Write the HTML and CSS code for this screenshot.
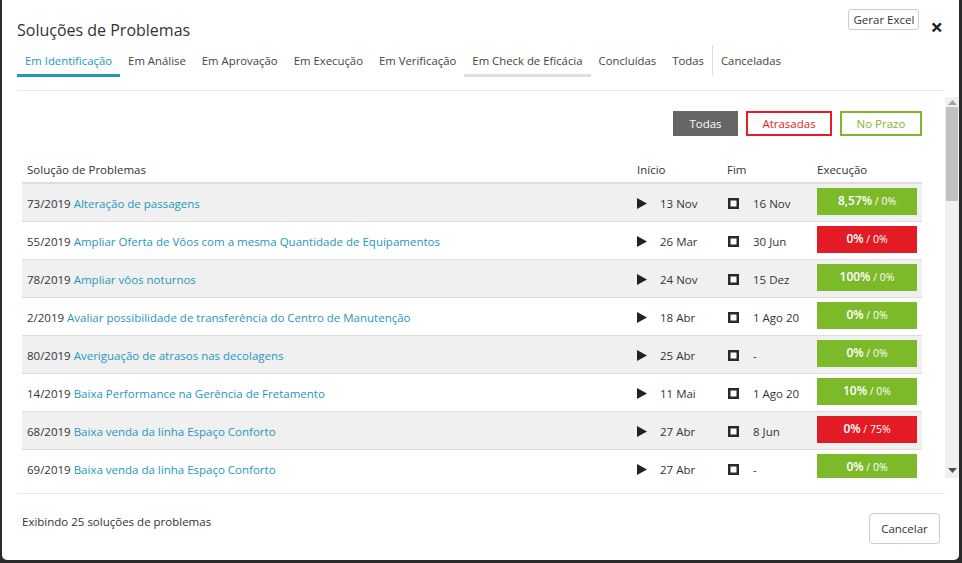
FILE: index.html
```html
<!DOCTYPE html>
<html lang="pt-BR">
<head>
<meta charset="utf-8">
<title>Soluções de Problemas</title>
<link rel="stylesheet" href="styles.css">
</head>
<body>
<div class="modal">
  <div class="head">
    <h4 class="title">Soluções de Problemas</h4>
    <div class="head-actions">
      <button class="btn-excel">Gerar Excel</button>
      <span class="close">×</span>
    </div>
  </div>
  <nav class="tabs">
    <a class="tab active">Em Identificação</a>
    <a class="tab">Em Análise</a>
    <a class="tab">Em Aprovação</a>
    <a class="tab">Em Execução</a>
    <a class="tab">Em Verificação</a>
    <a class="tab hover">Em Check de Eficácia</a>
    <a class="tab">Concluídas</a>
    <a class="tab">Todas</a>
    <a class="tab sep">Canceladas</a>
  </nav>
  <div class="body">
    <div class="scroll">
      <div class="filters">
        <button class="f f-all">Todas</button>
        <button class="f f-late">Atrasadas</button>
        <button class="f f-ok">No Prazo</button>
      </div>
      <table class="grid">
        <colgroup>
          <col class="c1"><col class="c2"><col class="c3"><col class="c4">
        </colgroup>
        <thead>
          <tr><th>Solução de Problemas</th><th>Início</th><th>Fim</th><th>Execução</th></tr>
        </thead>
        <tbody>
          <tr>
            <td>73/2019 <a class="lnk">Alteração de passagens</a></td>
            <td><span class="ic play"><svg width="10" height="11" viewBox="0 0 10 11"><polygon points="0,0 10,5.5 0,11" fill="#222"/></svg></span>13 Nov</td>
            <td><span class="ic stop"><svg width="11" height="11" viewBox="0 0 11 11"><rect x="1.25" y="1.25" width="8.5" height="8.5" fill="#fff" stroke="#2a2a2a" stroke-width="2.5"/></svg></span>16 Nov</td>
            <td><div class="ex green"><b>8,57%</b> / 0%</div></td>
          </tr>
          <tr>
            <td>55/2019 <a class="lnk">Ampliar Oferta de Vôos com a mesma Quantidade de Equipamentos</a></td>
            <td><span class="ic play"><svg width="10" height="11" viewBox="0 0 10 11"><polygon points="0,0 10,5.5 0,11" fill="#222"/></svg></span>26 Mar</td>
            <td><span class="ic stop"><svg width="11" height="11" viewBox="0 0 11 11"><rect x="1.25" y="1.25" width="8.5" height="8.5" fill="#fff" stroke="#2a2a2a" stroke-width="2.5"/></svg></span>30 Jun</td>
            <td><div class="ex red"><b>0%</b> / 0%</div></td>
          </tr>
          <tr>
            <td>78/2019 <a class="lnk">Ampliar vôos noturnos</a></td>
            <td><span class="ic play"><svg width="10" height="11" viewBox="0 0 10 11"><polygon points="0,0 10,5.5 0,11" fill="#222"/></svg></span>24 Nov</td>
            <td><span class="ic stop"><svg width="11" height="11" viewBox="0 0 11 11"><rect x="1.25" y="1.25" width="8.5" height="8.5" fill="#fff" stroke="#2a2a2a" stroke-width="2.5"/></svg></span>15 Dez</td>
            <td><div class="ex green"><b>100%</b> / 0%</div></td>
          </tr>
          <tr>
            <td>2/2019 <a class="lnk">Avaliar possibilidade de transferência do Centro de Manutenção</a></td>
            <td><span class="ic play"><svg width="10" height="11" viewBox="0 0 10 11"><polygon points="0,0 10,5.5 0,11" fill="#222"/></svg></span>18 Abr</td>
            <td><span class="ic stop"><svg width="11" height="11" viewBox="0 0 11 11"><rect x="1.25" y="1.25" width="8.5" height="8.5" fill="#fff" stroke="#2a2a2a" stroke-width="2.5"/></svg></span>1 Ago 20</td>
            <td><div class="ex green"><b>0%</b> / 0%</div></td>
          </tr>
          <tr>
            <td>80/2019 <a class="lnk">Averiguação de atrasos nas decolagens</a></td>
            <td><span class="ic play"><svg width="10" height="11" viewBox="0 0 10 11"><polygon points="0,0 10,5.5 0,11" fill="#222"/></svg></span>25 Abr</td>
            <td><span class="ic stop"><svg width="11" height="11" viewBox="0 0 11 11"><rect x="1.25" y="1.25" width="8.5" height="8.5" fill="#fff" stroke="#2a2a2a" stroke-width="2.5"/></svg></span>-</td>
            <td><div class="ex green"><b>0%</b> / 0%</div></td>
          </tr>
          <tr>
            <td>14/2019 <a class="lnk">Baixa Performance na Gerência de Fretamento</a></td>
            <td><span class="ic play"><svg width="10" height="11" viewBox="0 0 10 11"><polygon points="0,0 10,5.5 0,11" fill="#222"/></svg></span>11 Mai</td>
            <td><span class="ic stop"><svg width="11" height="11" viewBox="0 0 11 11"><rect x="1.25" y="1.25" width="8.5" height="8.5" fill="#fff" stroke="#2a2a2a" stroke-width="2.5"/></svg></span>1 Ago 20</td>
            <td><div class="ex green"><b>10%</b> / 0%</div></td>
          </tr>
          <tr>
            <td>68/2019 <a class="lnk">Baixa venda da linha Espaço Conforto</a></td>
            <td><span class="ic play"><svg width="10" height="11" viewBox="0 0 10 11"><polygon points="0,0 10,5.5 0,11" fill="#222"/></svg></span>27 Abr</td>
            <td><span class="ic stop"><svg width="11" height="11" viewBox="0 0 11 11"><rect x="1.25" y="1.25" width="8.5" height="8.5" fill="#fff" stroke="#2a2a2a" stroke-width="2.5"/></svg></span>8 Jun</td>
            <td><div class="ex red"><b>0%</b> / 75%</div></td>
          </tr>
          <tr>
            <td>69/2019 <a class="lnk">Baixa venda da linha Espaço Conforto</a></td>
            <td><span class="ic play"><svg width="10" height="11" viewBox="0 0 10 11"><polygon points="0,0 10,5.5 0,11" fill="#222"/></svg></span>27 Abr</td>
            <td><span class="ic stop"><svg width="11" height="11" viewBox="0 0 11 11"><rect x="1.25" y="1.25" width="8.5" height="8.5" fill="#fff" stroke="#2a2a2a" stroke-width="2.5"/></svg></span>-</td>
            <td><div class="ex green"><b>0%</b> / 0%</div></td>
          </tr>
        </tbody>
      </table>
    </div>
    <div class="sbar">
      <div class="sb-btn up"><svg width="9" height="5" viewBox="0 0 9 5"><polygon points="0,5 9,5 4.5,0" fill="#a3a3a3"/></svg></div>
      <div class="sb-track"><div class="sb-thumb"></div></div>
      <div class="sb-btn down"><svg width="9" height="5" viewBox="0 0 9 5"><polygon points="0,0 9,0 4.5,5" fill="#505050"/></svg></div>
    </div>
  </div>
  <div class="footer">
    <span class="count">Exibindo 25 soluções de problemas</span>
    <button class="btn-cancel">Cancelar</button>
  </div>
</div>
</body>
</html>
```
FILE: styles.css
```css
* { box-sizing: border-box; }
html, body { margin: 0; padding: 0; }
body {
  background: #2b2b2b;
  font-family: "Open Sans", "Noto Sans", sans-serif;
  color: #333;
  font-size: 11.5px;
  height: 563px;
  overflow: hidden;
}
.modal {
  margin-left: 2px;
  width: 957px;
  height: 560px;
  background: #fff;
  border-radius: 0 0 5px 5px;
  display: flex;
  flex-direction: column;
}
.head {
  height: 47px;
  display: flex;
  justify-content: space-between;
  align-items: flex-start;
  padding: 0 16px 0 15px;
}
.title {
  margin: 18px 0 0 0;
  font-size: 16px;
  font-weight: normal;
  line-height: 24px;
  color: #333;
}
.head-actions { display: flex; align-items: flex-start; }
.btn-excel {
  margin-top: 9px;
  height: 21px;
  width: 71px;
  padding: 0;
  font-family: inherit;
  font-size: 11.5px;
  color: #333;
  background: #fff;
  border: 1px solid #ccc;
  border-radius: 3px;
}
.close {
  margin: 14px 0 0 11px;
  font-size: 22px;
  font-weight: bold;
  line-height: 24px;
  color: #222;
}
.tabs {
  display: flex;
  margin-left: 15px;
  height: 30px;
  margin-bottom: 13px;
}
.tab {
  padding: 0 8px;
  line-height: 25px;
  border-bottom: 3px solid transparent;
  color: #444;
  font-size: 11.35px;
  white-space: nowrap;
  padding-top: 1px;
}
.tab.active { color: #2597bd; border-bottom-color: #2397b8; }
.tab.hover { border-bottom-color: #dedede; }
.tab.sep { border-left: 1px solid #ddd; margin-top: -2px; padding-top: 3px; }
.body {
  display: flex;
  margin-left: 15px;
  height: 388px;
}
.scroll {
  width: 928px;
  border-top: 1px solid #e5e5e5;
  overflow: hidden;
  padding: 0 23px 0 5px;
}
.filters {
  display: flex;
  justify-content: flex-end;
  gap: 8px;
  margin-top: 20px;
}
.f {
  height: 25px;
  padding: 0;
  font-family: inherit;
  font-size: 11.5px;
  background: #fff;
  border: 2px solid;
}
.f-all { width: 65px; background: #666; border-color: #666; color: #fff; }
.f-late { width: 86px; border-color: #e31e26; color: #e31e26; }
.f-ok { width: 82px; border-color: #7cb82f; color: #7cb82f; }
.grid {
  width: 900px;
  border-collapse: collapse;
  table-layout: fixed;
  margin-top: 19px;
}
.c1 { width: 610px; }
.c2 { width: 90px; }
.c3 { width: 90px; }
.c4 { width: 110px; }
.grid th {
  text-align: left;
  font-weight: normal;
  height: 28px;
  padding: 2px 5px 0 5px;
  vertical-align: middle;
  border-bottom: 2px solid #ddd;
  white-space: nowrap;
}
.grid td {
  height: 38px;
  padding: 2px 5px 0 5px;
  border-bottom: 1px solid #ddd;
  vertical-align: middle;
  white-space: nowrap;
}
.grid tbody tr:nth-child(odd) td { background: #f0f0f0; }
.lnk { color: #2597bd; }
.ic { display: inline-block; vertical-align: middle; margin-top: -2px; }
.play { margin-right: 13px; }
.play svg, .stop svg { display: block; }
.stop { margin-right: 14px; margin-left: 1px; }
.ex {
  height: 27px;
  line-height: 25px;
  text-align: center;
  color: #fff;
  font-size: 10.5px;
  margin-top: -3px;
}
.ex b { font-size: 12px; font-weight: 600; }
.green { background: #7cba2a; }
.red { background: #e21b24; }
.sbar {
  width: 14px;
  margin-top: 7px;
  height: 381px;
  background: #f0f0f0;
  display: flex;
  flex-direction: column;
}
.sb-btn { height: 10px; display: flex; justify-content: center; align-items: center; }
.sb-btn.down { height: 16px; }
.sb-track { flex: 1; padding: 0 1px; }
.sb-thumb { height: 94px; background: #c1c1c1; }
.footer {
  margin: 15px 0 0 15px;
  width: 928px;
  border-top: 1px solid #e5e5e5;
  padding: 19px 5px 0 5px;
  display: flex;
  justify-content: space-between;
  align-items: flex-start;
}
.count { margin-top: 1px; }
.btn-cancel {
  width: 71px;
  height: 31px;
  padding: 0;
  font-family: inherit;
  font-size: 11.5px;
  color: #333;
  background: #fff;
  border: 1px solid #ccc;
  border-radius: 4px;
}
```
